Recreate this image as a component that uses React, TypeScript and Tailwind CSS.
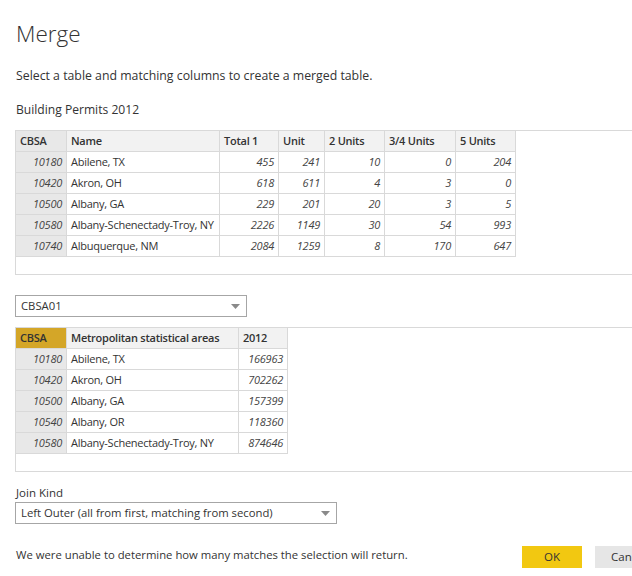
import React from "react";

type Row = (string | number)[];

const permitCols = ["CBSA", "Name", "Total 1", "Unit", "2 Units", "3/4 Units", "5 Units"];
const permitRows: Row[] = [
  [10180, "Abilene, TX", 455, 241, 10, 0, 204],
  [10420, "Akron, OH", 618, 611, 4, 3, 0],
  [10500, "Albany, GA", 229, 201, 20, 3, 5],
  [10580, "Albany-Schenectady-Troy, NY", 2226, 1149, 30, 54, 993],
  [10740, "Albuquerque, NM", 2084, 1259, 8, 170, 647],
];

const metroCols = ["CBSA", "Metropolitan statistical areas", "2012"];
const metroRows: Row[] = [
  [10180, "Abilene, TX", 166963],
  [10420, "Akron, OH", 702262],
  [10500, "Albany, GA", 157399],
  [10540, "Albany, OR", 118360],
  [10580, "Albany-Schenectady-Troy, NY", 874646],
];

function DataTable({
  cols,
  rows,
  gridClass,
  selected = false,
}: {
  cols: string[];
  rows: Row[];
  gridClass: string;
  selected?: boolean;
}) {
  return (
    <div className="w-[640px] h-[145px] border-t border-l border-b border-[#d9d9d9] bg-white">
      <div className={`grid ${gridClass} w-fit text-[11px] tracking-[-0.25px] text-[#333]`}>
        {cols.map((c, i) => (
          <div
            key={c}
            className={`h-[21px] px-[4px] flex items-center whitespace-nowrap overflow-hidden font-semibold border-r border-b border-[#d9d9d9] ${
              i === 0 ? (selected ? "bg-[#d4a628]" : "bg-[#e8e8e8]") : "bg-[#f2f2f2]"
            }`}
          >
            {c}
          </div>
        ))}
        {rows.map((r, ri) =>
          r.map((v, ci) => (
            <div
              key={`${ri}-${ci}`}
              className={`h-[21px] px-[4px] flex items-center whitespace-nowrap overflow-hidden border-r border-b border-[#d9d9d9] ${
                typeof v === "number" ? "justify-end italic text-[#444]" : ""
              } ${ci === 0 ? "bg-[#e8e8e8]" : "bg-white"}`}
            >
              {v}
            </div>
          ))
        )}
      </div>
    </div>
  );
}

function Select({ value, widthClass }: { value: string; widthClass: string }) {
  return (
    <div
      className={`${widthClass} h-[22px] border border-[#a6a6a6] bg-white flex items-center justify-between pl-[5px] pr-[6px] text-[11.3px] text-[#333] whitespace-nowrap`}
    >
      <span>{value}</span>
      <svg width="9" height="5" viewBox="0 0 9 5">
        <path d="M0 0 L9 0 L4.5 5 Z" fill="#8a8a8a" />
      </svg>
    </div>
  );
}

export default function App() {
  return (
    <div
      className="w-[632px] h-[576px] overflow-hidden bg-white pl-[15px] text-[#333]"
      style={{ fontFamily: '"Segoe UI", "Open Sans", sans-serif' }}
    >
      <h1 className="pt-[19px] pl-[1px] text-[22.5px] leading-[30px] font-light text-[#333]">Merge</h1>
      <p className="mt-[19px] pl-[1px] text-[12.3px] leading-[16px] whitespace-nowrap">
        Select a table and matching columns to create a merged table.
      </p>
      <p className="mt-[18px] pl-[1px] text-[12.1px] leading-[16px] whitespace-nowrap">Building Permits 2012</p>

      <div className="mt-[12px]">
        <DataTable
          cols={permitCols}
          rows={permitRows}
          gridClass="grid-cols-[51px_153px_59px_46px_60px_71px_60px]"
        />
      </div>

      <div className="mt-[20px]">
        <Select value="CBSA01" widthClass="w-[232px]" />
      </div>

      <div className="mt-[10px]">
        <DataTable
          cols={metroCols}
          rows={metroRows}
          gridClass="grid-cols-[51px_172px_49px]"
          selected
        />
      </div>

      <p className="mt-[13px] pl-[1px] text-[11.5px] leading-[16px]">Join Kind</p>
      <div className="mt-[1px]">
        <Select value="Left Outer (all from first, matching from second)" widthClass="w-[322px]" />
      </div>

      <div className="mt-[22px] flex items-start">
        <p className="pl-[1px] pt-[1px] text-[11.3px] leading-[16px] w-[507px] shrink-0 whitespace-nowrap">
          We were unable to determine how many matches the selection will return.
        </p>
        <button className="w-[60px] h-[22px] shrink-0 bg-[#f2c811] text-[11.5px] text-[#333]">OK</button>
        <button className="ml-[13px] w-[70px] h-[22px] bg-[#e6e6e6] text-[11.5px] text-[#333] shrink-0 text-left pl-[16px] whitespace-nowrap">
          Cancel
        </button>
      </div>
    </div>
  );
}
